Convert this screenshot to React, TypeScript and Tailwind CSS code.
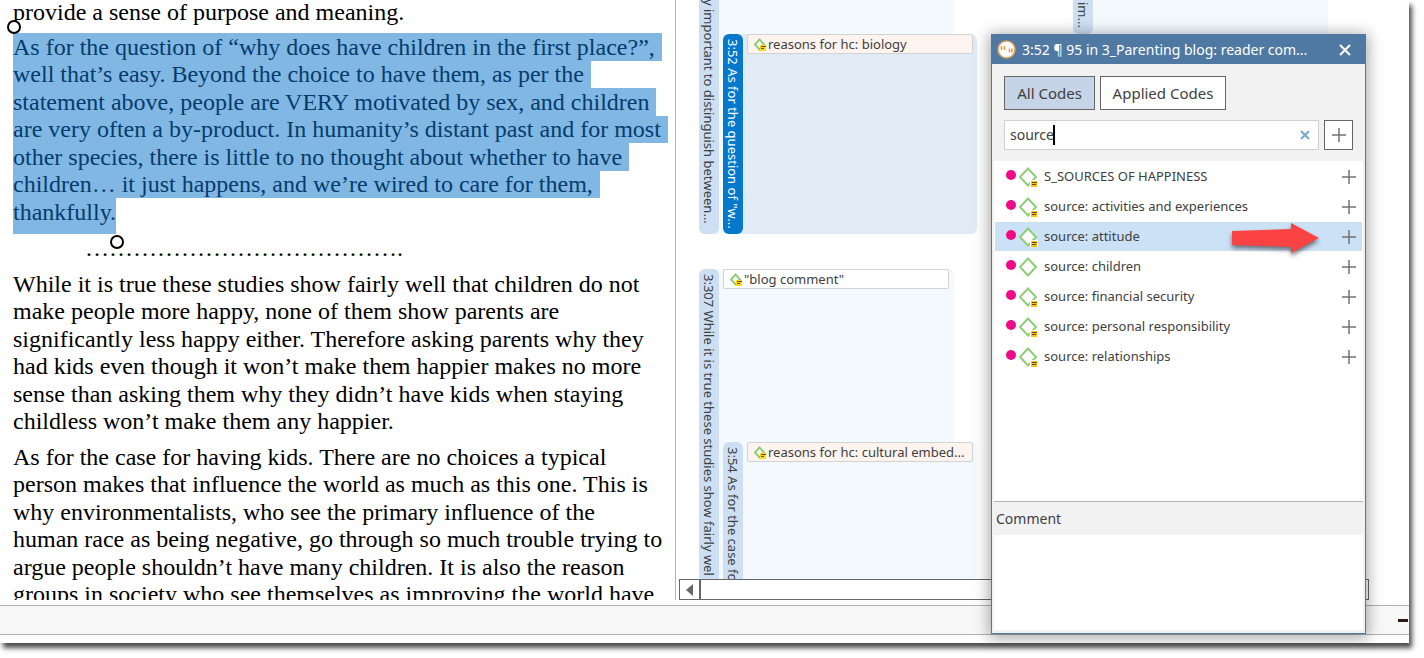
import { useState } from 'react'
import clsx from 'clsx'

const LINEAS_SELECCION = [
  'As for the question of “why does have children in the first place?”,',
  'well that’s easy. Beyond the choice to have them, as per the',
  'statement above, people are VERY motivated by sex, and children',
  'are very often a by-product. In humanity’s distant past and for most',
  'other species, there is little to no thought about whether to have',
  'children… it just happens, and we’re wired to care for them,',
  'thankfully.',
]

const PARRAFOS = [
  [
    'While it is true these studies show fairly well that children do not',
    'make people more happy, none of them show parents are',
    'significantly less happy either. Therefore asking parents why they',
    'had kids even though it won’t make them happier makes no more',
    'sense than asking them why they didn’t have kids when staying',
    'childless won’t make them any happier.',
  ],
  [
    'As for the case for having kids. There are no choices a typical',
    'person makes that influence the world as much as this one. This is',
    'why environmentalists, who see the primary influence of the',
    'human race as being negative, go through so much trouble trying to',
    'argue people shouldn’t have many children. It is also the reason',
    'groups in society who see themselves as improving the world have',
  ],
]

const CODES = [
  { name: 'S_SOURCES OF HAPPINESS', comment: true },
  { name: 'source: activities and experiences', comment: true },
  { name: 'source: attitude', comment: true },
  { name: 'source: children', comment: false },
  { name: 'source: financial security', comment: true },
  { name: 'source: personal responsibility', comment: true },
  { name: 'source: relationships', comment: true },
]

function CodeIcon({ comment }: { comment: boolean }) {
  return (
    <svg width="20" height="20" viewBox="0 0 20 20" className="shrink-0" aria-hidden="true">
      <path d="M10 1.500 L18 10 L10 18.500 L2 10 Z" fill="#fff" stroke="#8fce78" strokeWidth="2" />
      {comment && (
        <>
          <rect x="12" y="13" width="8" height="7" fill="#fff" />
          <rect x="13" y="14" width="6" height="6" fill="#fcc419" />
          <rect x="14" y="15" width="5" height="1" fill="#6b4a1c" />
          <rect x="14" y="17" width="4" height="1" fill="#6b4a1c" />
        </>
      )}
    </svg>
  )
}

function Chip({ label, plain }: { label: string; plain?: boolean }) {
  return (
    <div
      className={clsx(
        'flex h-5 w-[226px] shrink-0 items-center gap-px rounded-xs border border-[#d2d2d2] pt-px pl-[5px] text-[13px] whitespace-nowrap text-[#404040]',
        plain ? 'bg-white' : 'bg-[#fef4ef]'
      )}
    >
      <svg width="14" height="14" viewBox="0 0 14 14" className="shrink-0" aria-hidden="true">
        <path d="M6.500 1.500 L11 6.500 L6.500 11.500 L2 6.500 Z" fill="#fff" stroke="#8fce78" strokeWidth="2" />
        <rect x="7" y="7" width="6" height="6" fill="#ffdd15" />
        <rect x="8" y="8" width="5" height="1" fill="#6b4a1c" />
        <rect x="8" y="10" width="3" height="1" fill="#6b4a1c" />
      </svg>
      {label}
    </div>
  )
}

function Bar({ label, className }: { label: string; className: string }) {
  return (
    <div
      className={clsx(
        'flex w-5 shrink-0 items-center overflow-hidden text-[13px] leading-5 whitespace-nowrap [writing-mode:vertical-rl]',
        className
      )}
    >
      <span className="w-5 shrink-0">{label}</span>
    </div>
  )
}

function Plus() {
  return (
    <svg width="14" height="14" viewBox="0 0 14 14" aria-hidden="true">
      <path d="M7 0v14M0 7h14" stroke="#767171" strokeWidth="1.500" />
    </svg>
  )
}

function Handle({ className }: { className: string }) {
  return (
    <span className={clsx('absolute size-[14px] rounded-full border-2 border-black bg-white', className)} />
  )
}

function DocumentText() {
  return (
    <article className="relative w-[676px] shrink-0 overflow-hidden border-r border-[#b5b5b5] pl-[13px] font-['Liberation_Serif',serif] text-2xl leading-7 whitespace-nowrap text-black">
      <p className="-mt-[2px] h-[35px]">provide a sense of purpose and meaning.</p>
      <div className="text-[#053c6c]">
        {LINEAS_SELECCION.map((linea, i) => (
          <p
            key={linea}
            className={clsx(
              'w-fit bg-[#80b7e3] even:leading-[27px]',
              i === LINEAS_SELECCION.length - 1 ? 'pb-2' : 'pr-[7px]'
            )}
          >
            {linea}
          </p>
        ))}
      </div>
      <p className="pl-[72px]">{'…'.repeat(13)}.</p>
      {PARRAFOS.map((parrafo, i) => (
        <div key={i} className="pt-2 first-of-type:pt-[6px]">
          {parrafo.map((linea) => (
            <p key={linea} className="even:leading-[27px]">
              {linea}
            </p>
          ))}
        </div>
      ))}
      <Handle className="top-5 left-[7px]" />
      <Handle className="top-[235px] left-[110px]" />
    </article>
  )
}

function MarginArea() {
  return (
    <section className="flex min-w-0 flex-1 flex-col text-[#404040]">
      <div className="flex h-[579px] gap-[119px] overflow-hidden pl-[23px]">
        <div className="flex w-[255px] shrink-0 flex-col gap-[35px]">
          <div className="flex h-[234px] gap-1 rounded-b-md bg-[#f4f9fd]">
            <Bar
              label="y important to distinguish between..."
              className="justify-end rounded-b-md bg-[#cddff2] pb-[10px]"
            />
            <div className="mt-[34px] flex w-[254px] shrink-0 gap-1 rounded-md bg-[#e1ebf5]">
              <Bar label={'3:52 As for the question of "w...'} className="rounded-md bg-[#0578cb] pt-[5px] text-white" />
              <Chip label="reasons for hc: biology" />
            </div>
          </div>
          <div className="flex h-[310px] gap-1 rounded-t-md bg-[#f4f9fd]">
            <Bar
              label="3:307 While it is true these studies show fairly wel"
              className="rounded-t-md bg-[#cddff2] pt-[5px]"
            />
            <div className="flex flex-col justify-between">
              <Chip label={'"blog comment"'} plain />
              <div className="flex h-[137px] w-[254px] gap-1 rounded-t-md bg-[#f4f9fd]">
                <Bar label="3:54 As for the case fo" className="rounded-t-md bg-[#cddff2] pt-[5px]" />
                <Chip label="reasons for hc: cultural embed..." />
              </div>
            </div>
          </div>
        </div>
        <div className="flex h-[34px] w-[255px] shrink-0 bg-[#f4f9fd]">
          <Bar label="im..." className="rounded-b-md bg-[#cddff2] pt-[2px]" />
        </div>
      </div>
      <div className="mr-10 ml-[3px] flex h-[21px]">
        <button aria-label="Scroll left" className="flex w-[21px] items-center justify-center border border-[#666] bg-white">
          <svg width="7" height="12" viewBox="0 0 7 12" aria-hidden="true">
            <path d="M7 0v12L0 6z" fill="#666" />
          </svg>
        </button>
        <div className="flex-1 border border-[#666] bg-white" />
      </div>
    </section>
  )
}

function CodingDialog() {
  const [query, setQuery] = useState('source')
  const [selected, setSelected] = useState('source: attitude')

  return (
    <div
      role="dialog"
      aria-label="Apply codes"
      className="absolute top-[34px] right-[43px] bottom-[9px] flex w-[375px] flex-col border border-[#4f79a3] bg-[#f2f2f2] text-[#404040] shadow-[0_2px_14px_2px_rgba(0,0,0,0.35)]"
    >
      <header className="flex h-[29px] shrink-0 items-center bg-[#4f79a3] pr-[14px] pl-[5px] text-sm text-white">
        <svg width="19" height="19" viewBox="0 0 19 19" aria-hidden="true">
          <circle cx="9.500" cy="9.500" r="8.500" fill="#fff" stroke="#e0a25a" strokeWidth="1.500" />
          <path d="M4.500 6v4M7.500 6v4M12.500 8.500v4M15 8.500v4" stroke="#dc9648" strokeWidth="1.500" />
        </svg>
        <h2 className="flex-1 pl-[6px]">3:52 ¶ 95 in 3_Parenting blog: reader com...</h2>
        <button aria-label="Close">
          <svg width="12" height="12" viewBox="0 0 12 12" aria-hidden="true">
            <path d="M1 1l10 10M11 1L1 11" stroke="#fff" strokeWidth="2" />
          </svg>
        </button>
      </header>

      <div className="flex shrink-0 gap-[5px] px-3 pt-3 text-[15px]">
        <button className="h-[34px] w-[91px] border border-[#666] bg-[#c5d4e6]">All Codes</button>
        <button className="h-[34px] w-[126px] border border-[#666] bg-white">Applied Codes</button>
      </div>

      <div className="flex shrink-0 gap-[5px] px-3 pt-[10px] pb-[11px]">
        <div className="relative flex flex-1 items-center border border-[#d0d0d0] bg-white pr-2">
          <input
            aria-label="Search codes"
            value={query}
            onChange={(e) => setQuery(e.target.value)}
            className="min-w-0 flex-1 pl-[5px] text-sm outline-none"
          />
          <span className="absolute left-12 h-5 w-[2px] bg-black" />
          <button aria-label="Clear search" onClick={() => setQuery('')}>
            <svg width="10" height="10" viewBox="0 0 10 10" aria-hidden="true">
              <path d="M1 1l8 8M9 1L1 9" stroke="#74a9d0" strokeWidth="2" />
            </svg>
          </button>
        </div>
        <button aria-label="New code" className="flex h-[30px] w-[29px] items-center justify-center border border-[#666] bg-white">
          <Plus />
        </button>
      </div>

      <ul className="relative mx-[2px] flex-1 border-b border-[#b5b5b5] bg-white px-px text-[13px]">
        {CODES.map((code) => (
          <li
            key={code.name}
            onClick={() => setSelected(code.name)}
            className={clsx(
              'mt-px flex h-[29px] items-center pr-[6px] pl-[11px]',
              code.name === selected && 'bg-[#cbe1f5]'
            )}
          >
            <span className="mb-1 size-[10px] rounded-full bg-[#f00a87]" />
            <span className="ml-[2px]">
              <CodeIcon comment={code.comment} />
            </span>
            <span className="flex-1 pl-[6px]">{code.name}</span>
            <button aria-label={`Apply ${code.name}`} className="pt-px">
              <Plus />
            </button>
          </li>
        ))}
        {/* arrow pointing at the add button */}
        <svg
          width="92"
          height="38"
          viewBox="0 0 92 38"
          className="absolute top-[61px] right-[41px] drop-shadow-[0_3px_2px_rgba(0,0,0,0.5)]"
          aria-hidden="true"
        >
          <path d="M2 9 L61 7 L61 1 L89 16 L61 31 L61 25 L2 23 Z" fill="#fb4343" />
        </svg>
      </ul>

      <label htmlFor="comment" className="mx-[2px] flex h-[33px] shrink-0 items-center pt-px pl-[2px] text-sm">
        Comment
      </label>
      <textarea id="comment" className="mx-[2px] mb-[3px] h-[95px] shrink-0 resize-none bg-white outline-none" />
    </div>
  )
}

export default function App() {
  return (
    <div className="h-screen overflow-hidden bg-white pr-[15px] pb-[15px] font-['Noto_Sans','Open_Sans',sans-serif]">
      <div className="relative flex h-full flex-col bg-white shadow-[3px_5px_5px_0_rgba(0,0,0,0.7)]">
        <main className="flex h-[600px] min-h-0 shrink-0">
          <DocumentText />
          <MarginArea />
        </main>
        <footer className="mt-[5px] flex h-[30px] shrink-0 items-center justify-end border-y border-[#b0b0b0] bg-[#f8f8f8] pr-px">
          <button aria-label="Zoom out" className="h-[3px] w-[10px] bg-[#2a1a14]" />
        </footer>
        <CodingDialog />
      </div>
    </div>
  )
}
